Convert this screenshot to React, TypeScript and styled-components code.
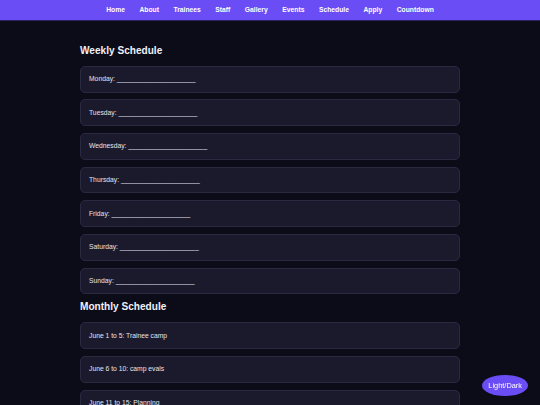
import styled, { createGlobalStyle } from 'styled-components';

const GlobalStyle = createGlobalStyle`
  html, body {
    margin: 0;
    padding: 0;
    background-color: #0c0b18;
    color: #e4e4ee;
    font-family: "Liberation Sans", Arial, sans-serif;
  }
`;

const NavBar = styled.nav`
  display: flex;
  justify-content: center;
  gap: 14.5px;
  padding: 6.1px 0;
  background-color: #6b4df5;
  border-bottom: 1px solid #2a2163;
`;

const NavLink = styled.a`
  font-size: 6.75px;
  line-height: 7.8px;
  font-weight: bold;
  color: #ffffff;
  text-decoration: none;
`;

const Main = styled.main`
  max-width: 380px;
  margin: 0 auto;
  padding-top: 23.6px;
`;

const SectionTitle = styled.h2`
  margin: 0 0 9.6px;
  font-size: 10.1px;
  line-height: 11.6px;
  font-weight: bold;
  color: #f0f0f6;
`;

const Card = styled.div`
  margin-bottom: 6.85px;
  padding: 8.4px 8px;
  font-size: 6.75px;
  line-height: 8px;
  background-color: #1b1a2d;
  border: 1px solid #2a2942;
  border-radius: 5px;
`;

const ToggleButton = styled.button`
  position: fixed;
  right: 12px;
  bottom: 9px;
  padding: 5px 6px;
  border: 0;
  border-radius: 50%;
  background-color: #6b4df5;
  color: #ffffff;
  font-family: "Liberation Sans", Arial, sans-serif;
  font-size: 7.4px;
  line-height: 11px;
`;

const links = ['Home', 'About', 'Trainees', 'Staff', 'Gallery', 'Events', 'Schedule', 'Apply', 'Countdown'];
const days = ['Monday', 'Tuesday', 'Wednesday', 'Thursday', 'Friday', 'Saturday', 'Sunday'];
const blank = '_'.repeat(21);
const months = [
  'June 1 to 5: Trainee camp',
  'June 6 to 10: camp evals',
  'June 11 to 15: Planning',
  'June 16 to 20: Practice',
  'June 21 to 30: Showcase prep',
];

export default function App() {
  return (
    <>
      <GlobalStyle />
      <NavBar>
        {links.map((l) => (
          <NavLink key={l} href="#">
            {l}
          </NavLink>
        ))}
      </NavBar>
      <Main>
        <SectionTitle>Weekly Schedule</SectionTitle>
        {days.map((d) => (
          <Card key={d}>
            {d}: {blank}
          </Card>
        ))}
        <SectionTitle>Monthly Schedule</SectionTitle>
        {months.map((m) => (
          <Card key={m}>{m}</Card>
        ))}
      </Main>
      <ToggleButton>Light/Dark</ToggleButton>
    </>
  );
}
